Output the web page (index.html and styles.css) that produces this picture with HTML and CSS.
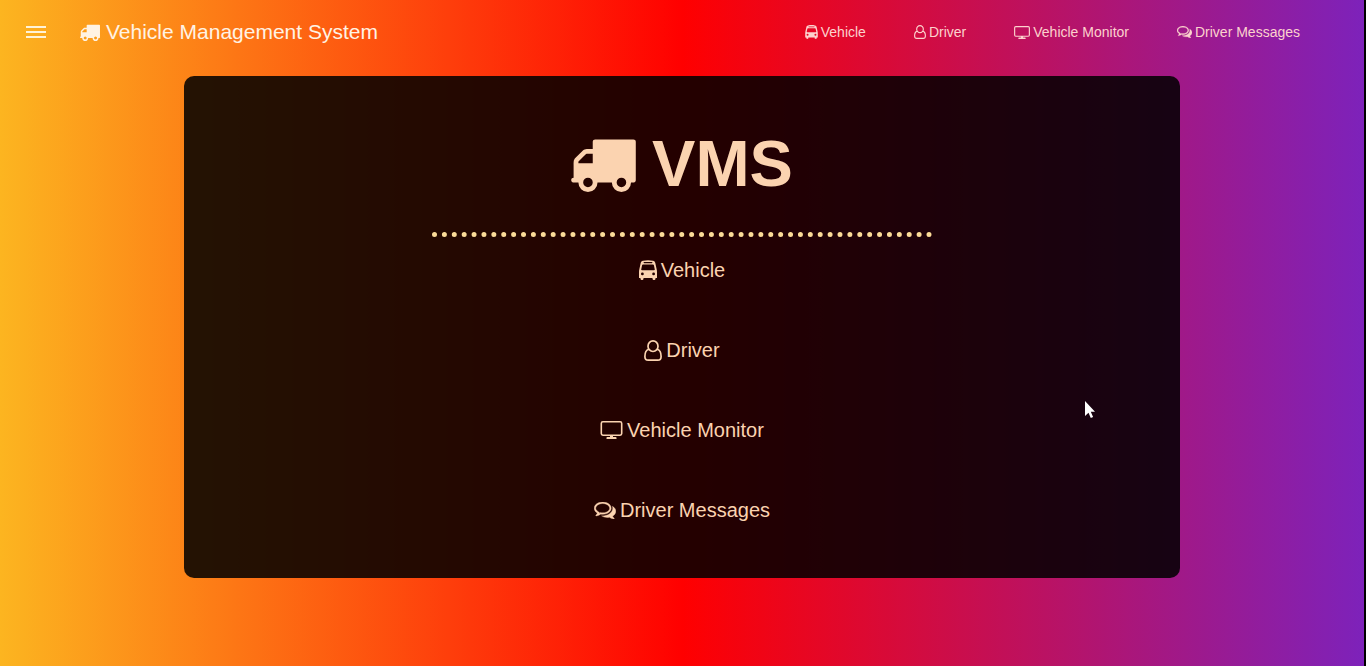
FILE: index.html
```html
<!DOCTYPE html>
<html lang="en">
<head>
<meta charset="utf-8">
<title>Vehicle Management System</title>
<meta name="viewport" content="width=device-width, initial-scale=1">
<link rel="stylesheet" href="styles.css">
</head>
<body>
<svg class="sprite" aria-hidden="true">
  <symbol id="truck" viewBox="64 192 1728 1472"><path d="M640 1408q0-52-38-90t-90-38-90 38-38 90 38 90 90 38 90-38 38-90zm-384-512h384v-256h-158q-13 0-22 9l-195 195q-9 9-9 22v30zm1280 512q0-52-38-90t-90-38-90 38-38 90 38 90 90 38 90-38 38-90zm256-1088v1024q0 15-4 26.500t-13.500 18.500-16.500 11.500-23.500 6-22.500 2-25.500 0-22.500-.5q0 106-75 181t-181 75-181-75-75-181h-384q0 106-75 181t-181 75-181-75-75-181h-64q-3 0-22.500.5t-25.500 0-22.500-2-23.500-6-16.500-11.500-13.500-18.500-4-26.500q0-26 19-45t45-19v-320q0-8-.5-35t0-38 2.500-34.500 6.500-37 14-30.500 22.500-30l198-198q19-19 50.500-32t58.500-13h160v-192q0-26 19-45t45-19h1024q26 0 45 19t19 45z"/></symbol>
  <symbol id="bus" viewBox="0 0 18 20"><path fill-rule="evenodd" d="M4 .7C7 0 11 0 14 .7c1.400.4 2 1 2.300 2.200L17.600 9c.3 1 .4 2 .4 3v6h-1.500v.7c0 1.700-3 1.700-3 0V18h-9v.7c0 1.700-3 1.700-3 0V18H0v-6c0-1 .1-2 .4-3l1.300-6.100C2 1.700 2.600 1.100 4 .7zM5.200 2c-.9 0-.9 1.200 0 1.200h7.600c.9 0 .9-1.200 0-1.200zM4 4.500c-.5 0-.8.3-.9.700l-.9 4.200c-.1.500.2.900.8.900h12c.6 0 .9-.4.800-.9l-.9-4.200c-.1-.4-.4-.7-.9-.7zM3.400 12.500a1.400 1.400 0 1 0 0 2.800 1.400 1.400 0 1 0 0-2.800zM14.600 12.500a1.400 1.400 0 1 0 0 2.800 1.400 1.400 0 1 0 0-2.800z"/></symbol>
  <symbol id="user" viewBox="0 0 18 21"><path d="M4.700 9.200C2 10 .9 12.700.9 16.400c0 2.200 1.300 3.700 3.300 3.700h9.600c2 0 3.300-1.500 3.300-3.700 0-3.700-1.100-6.400-3.800-7.200M9 .9a5 5.300 0 1 1 0 10.600A5 5.300 0 1 1 9 .9z" fill="none" stroke="currentColor" stroke-width="1.700"/></symbol>
  <symbol id="monitor" viewBox="0 0 22 18"><rect x=".8" y=".8" width="20.400" height="13.400" rx="1.600" fill="none" stroke="currentColor" stroke-width="1.600"/><path d="M9.500 14h3v2h2.700q.8 0 .8.800v1.200H6v-1.200q0-.8.800-.8h2.700z"/></symbol>
  <symbol id="chat" viewBox="0 256 1792 1408"><path d="M704 384q-153 0-286 52t-211.500 141-78.500 191q0 82 53 158t149 132l97 56-35 84q34-20 62-39l44-31 53 10q78 14 153 14 153 0 286-52t211.500-141 78.500-191-78.500-191-211.500-141-286-52zm0-128q191 0 353.500 68.500t256.500 186.500 94 257-94 257-256.500 186.500-353.500 68.500q-86 0-176-16-124 88-278 128-36 9-86 16h-3q-11 0-20.500-8t-11.500-21q-1-3-1-6.500t.5-6.500 2-6l2.500-5 3.500-5.500 4-5 4.500-5 4-4.500q5-6 23-25t26-29.500 22.500-29 25-38.500 20.500-44q-124-72-195-177t-71-224q0-139 94-257t256.500-186.500 353.500-68.500zm822 1169q10 24 20.500 44t25 38.500 22.500 29 26 29.500 23 25q1 1 4 4.500t4.500 5 4 5 3.500 5.500l2.500 5 2 6 .5 6.500-1 6.500q-3 14-13 22t-22 7q-50-7-86-16-154-40-278-128-90 16-176 16-271 0-472-132 58 4 88 4 161 0 309-45t264-129q125-92 192-212t67-254q0-77-23-152 129 71 204 178t75 230q0 120-71 224.500t-195 176.500z" stroke="currentColor" stroke-width="30"/></symbol>
</svg>

<header class="topbar">
  <button class="menu-button" type="button" aria-label="Open menu">
    <svg viewBox="0 0 20 12"><path d="M0 0h20v2H0zM0 5h20v2H0zM0 10h20v2H0z"/></svg>
  </button>
  <a class="brand" href="#"><svg class="icon icon-truck"><use href="#truck"/></svg>Vehicle Management System</a>
  <nav class="topnav" aria-label="Main">
    <a href="#"><svg class="icon icon-bus"><use href="#bus"/></svg>Vehicle</a>
    <a href="#"><svg class="icon icon-user"><use href="#user"/></svg>Driver</a>
    <a href="#"><svg class="icon icon-monitor"><use href="#monitor"/></svg>Vehicle Monitor</a>
    <a href="#"><svg class="icon icon-chat"><use href="#chat"/></svg>Driver Messages</a>
  </nav>
</header>

<main class="panel">
  <h1 class="panel-title"><svg class="icon icon-truck"><use href="#truck"/></svg>VMS</h1>
  <hr class="dots">
  <nav class="panel-menu" aria-label="Sections">
    <a href="#"><svg class="icon icon-bus"><use href="#bus"/></svg>Vehicle</a>
    <a href="#"><svg class="icon icon-user"><use href="#user"/></svg>Driver</a>
    <a href="#"><svg class="icon icon-monitor"><use href="#monitor"/></svg>Vehicle Monitor</a>
    <a href="#"><svg class="icon icon-chat"><use href="#chat"/></svg>Driver Messages</a>
  </nav>
</main>

<svg class="cursor" viewBox="0 0 12 19" aria-hidden="true"><path d="M1 1v15l3.500-3.300L6.800 18l2.300-1-2.300-5.200H11z"/></svg>
</body>
</html>
```

FILE: styles.css
```css
* {
  box-sizing: border-box;
}

body {
  margin: 0;
  min-height: 100vh;
  border-right: 2px solid #000;
  background: linear-gradient(90deg, #fcb520 0%, #ff0000 50%, #7d22bb 100%);
  font-family: "Liberation Sans", Arial, sans-serif;
  color: #fbd3b0;
}

a {
  color: inherit;
  text-decoration: none;
}

.sprite {
  display: none;
}

.icon {
  flex: none;
  fill: currentColor;
}

.topbar {
  display: flex;
  align-items: center;
  height: 64px;
  padding: 0 64px 0 16px;
}

.menu-button {
  display: flex;
  align-items: center;
  justify-content: center;
  width: 40px;
  height: 40px;
  margin-right: 24px;
  padding: 0;
  border: 0;
  background: none;
  color: #fff3d8;
}

.menu-button svg {
  width: 20px;
  height: 12px;
  fill: currentColor;
}

.brand {
  display: flex;
  align-items: center;
  gap: 6px;
  font-size: 21px;
  color: #fff3e4;
}

.brand .icon-truck {
  width: 20px;
  height: 17px;
}

.topnav {
  display: flex;
  gap: 48px;
  margin-left: auto;
  font-size: 14px;
  color: #fcd2cd;
}

.topnav a,
.panel-menu a {
  display: flex;
  align-items: center;
  gap: 4px;
}

.topnav a {
  gap: 3px;
}

.topnav .icon-bus {
  width: 13px;
  height: 14px;
}

.topnav .icon-user {
  width: 12px;
  height: 14px;
}

.topnav .icon-monitor {
  width: 16px;
  height: 13px;
}

.topnav .icon-chat {
  width: 15px;
  height: 12px;
}

.panel {
  display: flex;
  flex-direction: column;
  align-items: center;
  width: 73%;
  margin: 12px auto 0;
  padding: 48px 24px 50px;
  border-radius: 10px;
  background: rgba(0, 0, 0, 0.86);
}

.panel-title {
  display: flex;
  align-items: center;
  gap: 16px;
  margin: 0;
  font-size: 65px;
  line-height: 80px;
}

.panel-title .icon-truck {
  width: 65px;
  height: 55px;
}

.dots {
  width: 500px;
  max-width: 100%;
  margin: 28px 0 15px;
  border: 0;
  border-top: 5px dotted #fcdc98;
}

.panel-menu {
  display: flex;
  flex-direction: column;
  align-items: center;
  gap: 44px;
  font-size: 20px;
  line-height: 36px;
}

.panel-menu .icon-bus {
  width: 18px;
  height: 20px;
}

.panel-menu .icon-user {
  width: 18px;
  height: 21px;
}

.panel-menu .icon-monitor {
  width: 23px;
  height: 18px;
}

.panel-menu .icon-chat {
  width: 22px;
  height: 17px;
}

.cursor {
  position: absolute;
  left: 1084px;
  top: 400px;
  width: 12px;
  height: 19px;
  fill: #fff;
}
```
